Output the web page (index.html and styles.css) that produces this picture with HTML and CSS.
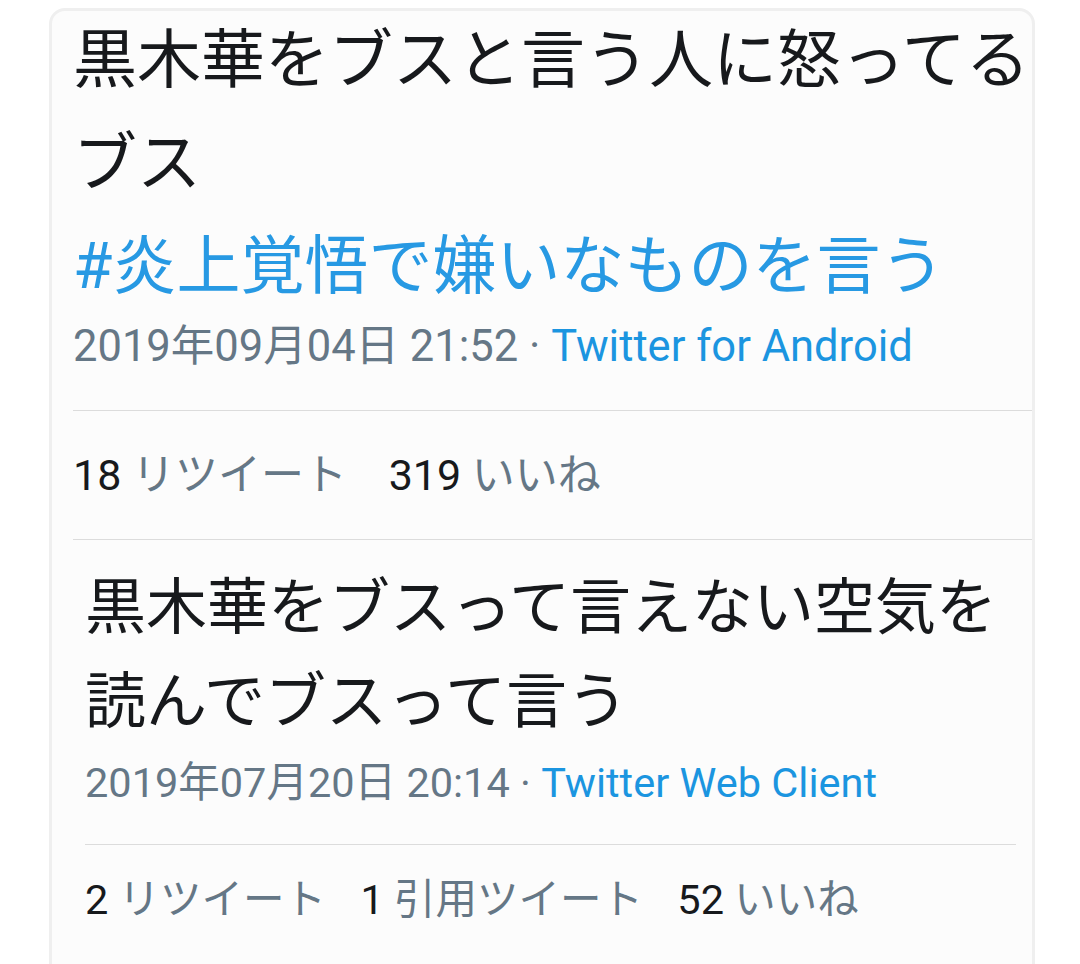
FILE: index.html
```html
<!DOCTYPE html>
<html lang="ja">
<head>
  <meta charset="UTF-8" />
  <meta name="viewport" content="width=device-width, initial-scale=1.0" />
  <title>ツイート</title>
  <link rel="stylesheet" href="styles.css">
</head>
<body>
  <div class="card">
    <section class="tweet">
      <p class="tweet-text">黒木華をブスと言う人に怒ってるブス<br><a class="tag" href="#">#炎上覚悟で嫌いなものを言う</a></p>
      <div class="meta">2019年09月04日 21:52 · <a class="source" href="#">Twitter for Android</a></div>
      <div class="stats">
        <span class="stat"><b>18</b> リツイート</span>
        <span class="stat"><b>319</b> いいね</span>
      </div>
    </section>

    <section class="tweet second">
      <p class="tweet-text">黒木華をブスって言えない空気を読んでブスって言う</p>
      <div class="meta">2019年07月20日 20:14 · <a class="source" href="#">Twitter Web Client</a></div>
      <div class="stats">
        <span class="stat"><b>2</b> リツイート</span>
        <span class="stat"><b>1</b> 引用ツイート</span>
        <span class="stat"><b>52</b> いいね</span>
      </div>
    </section>
  </div>
</body>
</html>
```

FILE: styles.css
```css
* {
  box-sizing: border-box;
  margin: 0;
  padding: 0;
}
html, body {
  height: 100%;
  background: #fff;
  overflow: hidden;
}
body {
  font-family: Roboto, "Noto Sans CJK JP", sans-serif;
  color: #17191c;
}
a {
  text-decoration: none;
}
.card {
  margin: 8px 0 0 49px;
  width: 986px;
  min-height: 1000px;
  background: #fcfcfc;
  border: 3px solid #efefef;
  border-radius: 16px;
}
.tweet {
  padding-left: 21px;
}
.tweet-text {
  margin-top: -2px;
  font-size: 64px;
  line-height: 103px;
}
.tag {
  color: #2799e3;
}
.meta {
  margin-top: -1px;
  padding-bottom: 33px;
  font-size: 43.5px;
  line-height: 60px;
  color: #657786;
}
.source {
  color: #1b95e0;
}
.stats {
  padding: 44px 0;
  font-size: 43px;
  line-height: 40px;
  color: #657786;
  border-top: 1px solid #dcdcdc;
  border-bottom: 1px solid #dcdcdc;
}
.stat {
  margin-right: 31px;
}
.stat b {
  font-weight: normal;
  color: #17191c;
}

/* second tweet is pasted from a slightly smaller capture */
.second {
  padding: 0 16px 0 33px;
}
.second .tweet-text {
  margin-top: 21px;
  font-size: 61px;
  line-height: 94px;
}
.second .meta {
  margin-top: 6px;
  padding-bottom: 33px;
  font-size: 41.5px;
  line-height: 56px;
}
.second .stats {
  padding-top: 35px;
  font-size: 41.5px;
  border-bottom: none;
}
.second .stat {
  margin-right: 24px;
}
```
